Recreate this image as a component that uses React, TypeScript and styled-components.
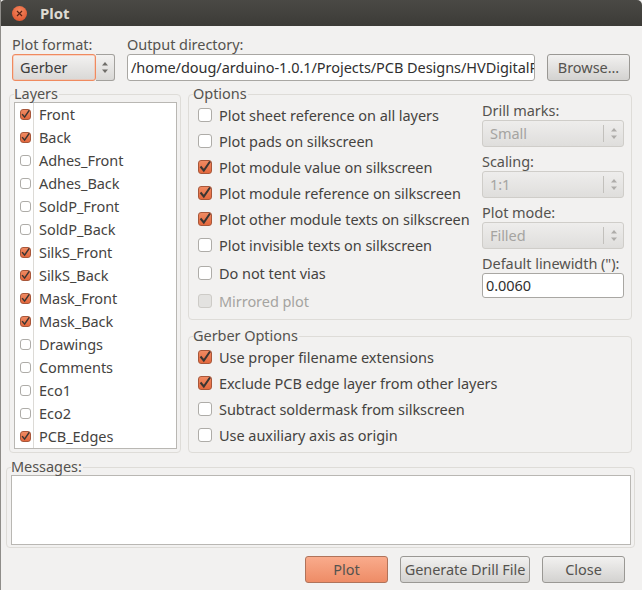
import { ReactNode } from 'react'
import styled, { createGlobalStyle } from 'styled-components'

const GlobalStyle = createGlobalStyle`
  html, body {
    margin: 0;
    padding: 0;
    background: #f2f1f0;
  }
  * {
    box-sizing: border-box;
  }
`

const TEXT_COLOR = '#3c3c3c'
const LABEL_COLOR = '#55534f'
const FRAME_COLOR = '#dedcd8'

const Window = styled.div`
  width: 642px;
  height: 590px;
  overflow: hidden;
  background: #f2f1f0;
  border-left: 1px solid #8f8d89;
  font-family: 'Noto Sans', sans-serif;
  font-size: 14.5px;
  letter-spacing: -0.05px;
  color: ${TEXT_COLOR};
  display: flex;
  flex-direction: column;
`

const TitleBar = styled.div`
  height: 26px;
  margin-left: -1px;
  flex: none;
  display: flex;
  align-items: center;
  gap: 13px;
  padding-left: 12px;
  border-radius: 5px 5px 0 0;
  background: linear-gradient(#4a4945, #3c3b37);
  color: #dfdbd2;
  font-size: 15px;
  font-weight: 700;
`

const CloseDot = styled.span`
  width: 15px;
  height: 15px;
  border-radius: 50%;
  background: radial-gradient(circle at 50% 35%, #f58b62, #dc4a25);
  display: flex;
  align-items: center;
  justify-content: center;
`

const TopRow = styled.div`
  display: grid;
  grid-template-columns: 103px 408px 83px;
  column-gap: 12px;
  padding: 10px 0 0 11px;
  align-items: end;
`

const FieldLabel = styled.div`
  height: 18px;
  line-height: 17px;
  color: ${LABEL_COLOR};
  white-space: nowrap;
`

const ComboGroup = styled.div`
  display: flex;
  height: 27px;
`

const ComboMain = styled.div`
  width: 84px;
  height: 27px;
  padding-left: 7px;
  line-height: 25px;
  border: 1px solid #f08a5f;
  box-shadow: 0 0 0 0.5px #f7b69b inset;
  border-radius: 3px;
  background: linear-gradient(#f3f2f1, #d9d8d6);
`

const ComboSpin = styled.div`
  width: 19px;
  height: 27px;
  display: flex;
  align-items: center;
  justify-content: center;
  border: 1px solid #a3a19d;
  border-left: none;
  border-radius: 0 3px 3px 0;
  background: linear-gradient(#f3f2f1, #d9d8d6);
`

const DisabledCombo = styled.div`
  width: 142px;
  height: 27px;
  display: flex;
  align-items: center;
  border: 1px solid #cfcdc9;
  border-radius: 3px;
  background: linear-gradient(#eeedec, #dfdedc);
  color: #a5a4a1;
  padding-left: 7px;
`

const DisabledValue = styled.span`
  flex: 1;
  margin-bottom: 2px;
`

const DisabledSpin = styled.span`
  width: 20px;
  height: 17px;
  border-left: 1px solid #c2c0bc;
  display: flex;
  align-items: center;
  justify-content: center;
`

const TextInput = styled.div`
  height: 27px;
  padding-left: 3px;
  line-height: 25px;
  background: #fff;
  border: 1px solid #a9a7a3;
  border-radius: 3px;
  color: #2f2f2f;
  white-space: nowrap;
  overflow: hidden;
`

const PushButton = styled.div<{ $width: number; $primary?: boolean }>`
  width: ${(props) => props.$width}px;
  height: 27px;
  line-height: 25px;
  text-align: center;
  border-radius: 3px;
  white-space: nowrap;
  color: ${LABEL_COLOR};
  border: 1px solid ${(props) => (props.$primary ? '#b0735a' : '#9a9894')};
  background: ${(props) =>
    props.$primary ? 'linear-gradient(#f9ab8c, #ee8c66)' : 'linear-gradient(#f2f1f0, #d3d2d0)'};
`

const Middle = styled.div`
  display: flex;
  gap: 7px;
  margin-top: 13px;
  padding-left: 8px;
`

const Frame = styled.div`
  position: relative;
  border: 1px solid ${FRAME_COLOR};
  border-radius: 4px;
`

const Legend = styled.span`
  position: absolute;
  top: -11px;
  left: 4px;
  height: 18px;
  line-height: 18px;
  padding-right: 1px;
  background: #f2f1f0;
  color: ${LABEL_COLOR};
`

const LayersFrame = styled(Frame)`
  width: 172px;
  height: 359px;
  padding: 7px 3px 0 4px;
`

const LayerList = styled.div`
  height: 347px;
  background: #fff;
  border: 1px solid #b9b7b3;
`

const LayerRow = styled.div`
  height: 23px;
  display: flex;
  align-items: center;
`

const LayerCheckCell = styled.div`
  width: 19px;
  height: 23px;
  padding-left: 5px;
  display: flex;
  align-items: center;
  border-right: 1px solid #dcdad6;
`

const LayerName = styled.span`
  margin: 0 0 2px 5px;
  color: #45433f;
`

const RightColumn = styled.div`
  width: 444px;
  display: flex;
  flex-direction: column;
  gap: 16px;
`

const OptionsFrame = styled(Frame)`
  height: 226px;
  padding: 7px 7px 0 9px;
  display: flex;
  justify-content: space-between;
`

const GerberFrame = styled(Frame)`
  height: 117px;
  padding: 7px 0 0 9px;
`

const CheckColumn = styled.div`
  min-width: 0;
`

const CheckRow = styled.div<{ $spaced?: boolean; $disabled?: boolean }>`
  height: 26px;
  margin-top: ${(props) => (props.$spaced ? 2 : 0)}px;
  display: flex;
  align-items: center;
  gap: 7px;
  white-space: nowrap;
  color: ${(props) => (props.$disabled ? '#a5a4a1' : '#45433f')};
`

const SideColumn = styled.div`
  width: 142px;
  display: flex;
  flex-direction: column;
`

const SideField = styled.div`
  margin-bottom: 6px;
`

const WidthInput = styled(TextInput)`
  height: 25px;
  line-height: 23px;
`

const MessagesFrame = styled(Frame)`
  width: 629px;
  height: 81px;
  margin: 14px 0 0 5px;
  padding: 7px 3px 0 4px;
`

const MessagesBox = styled.div`
  height: 70px;
  background: #fff;
  border: 1px solid #b9b7b3;
`

const Footer = styled.div`
  display: flex;
  justify-content: flex-end;
  gap: 12px;
  margin-top: 8px;
  padding-right: 17px;
`

const Box = styled.span<{ $size: number; $checked?: boolean; $disabled?: boolean }>`
  flex: none;
  width: ${(props) => props.$size}px;
  height: ${(props) => props.$size}px;
  display: flex;
  align-items: center;
  justify-content: center;
  border-radius: 3px;
  border: 1px solid
    ${(props) => (props.$checked ? '#a8573a' : props.$disabled ? '#cdcbc7' : '#aeaca8')};
  background: ${(props) =>
    props.$checked ? 'linear-gradient(#f08a62, #e4683d)' : props.$disabled ? '#e3e2e0' : '#fff'};
`

const Arrows = ({ color }: { color: string }) => (
  <svg width="6" height="13" viewBox="0 0 6 13">
    <path d="M3 1 L6 4.5 H0 Z" fill={color} />
    <path d="M3 12 L6 8.5 H0 Z" fill={color} />
  </svg>
)

const CheckMark = ({ size }: { size: number }) => (
  <svg width={size} height={size} viewBox="0 0 12 12">
    <path d="M1.5 5.5 L4.8 9.5 L11 0.5" fill="none" stroke="#3a3532" strokeWidth="2" />
  </svg>
)

const Check = ({ size, checked, disabled }: { size: number; checked?: boolean; disabled?: boolean }) => (
  <Box $size={size} $checked={checked} $disabled={disabled}>
    {checked && <CheckMark size={size - 2} />}
  </Box>
)

const Option = ({
  checked,
  spaced,
  disabled,
  children,
}: {
  checked?: boolean
  spaced?: boolean
  disabled?: boolean
  children: ReactNode
}) => (
  <CheckRow $spaced={spaced} $disabled={disabled}>
    <Check size={14} checked={checked} disabled={disabled} />
    <span>{children}</span>
  </CheckRow>
)

const SelectField = ({ label, value }: { label: string; value: string }) => (
  <SideField>
    <FieldLabel>{label}</FieldLabel>
    <DisabledCombo>
      <DisabledValue>{value}</DisabledValue>
      <DisabledSpin>
        <Arrows color="#aeaca9" />
      </DisabledSpin>
    </DisabledCombo>
  </SideField>
)

const LAYERS: [string, boolean][] = [
  ['Front', true],
  ['Back', true],
  ['Adhes_Front', false],
  ['Adhes_Back', false],
  ['SoldP_Front', false],
  ['SoldP_Back', false],
  ['SilkS_Front', true],
  ['SilkS_Back', true],
  ['Mask_Front', true],
  ['Mask_Back', true],
  ['Drawings', false],
  ['Comments', false],
  ['Eco1', false],
  ['Eco2', false],
  ['PCB_Edges', true],
]

const App = () => (
  <Window>
    <GlobalStyle />
    <TitleBar>
      <CloseDot>
        <svg width="7" height="7" viewBox="0 0 7 7">
          <path d="M1 1 L6 6 M6 1 L1 6" stroke="#5a2112" strokeWidth="1.2" />
        </svg>
      </CloseDot>
      Plot
    </TitleBar>

    <TopRow>
      <div>
        <FieldLabel>Plot format:</FieldLabel>
        <ComboGroup>
          <ComboMain>Gerber</ComboMain>
          <ComboSpin>
            <Arrows color="#6f6d69" />
          </ComboSpin>
        </ComboGroup>
      </div>
      <div>
        <FieldLabel>Output directory:</FieldLabel>
        <TextInput>/home/doug/arduino-1.0.1/Projects/PCB Designs/HVDigitalPlot</TextInput>
      </div>
      <PushButton $width={83}>Browse...</PushButton>
    </TopRow>

    <Middle>
      <LayersFrame>
        <Legend>Layers</Legend>
        <LayerList>
          {LAYERS.map(([name, checked]) => (
            <LayerRow key={name}>
              <LayerCheckCell>
                <Check size={11} checked={checked} />
              </LayerCheckCell>
              <LayerName>{name}</LayerName>
            </LayerRow>
          ))}
        </LayerList>
      </LayersFrame>

      <RightColumn>
        <OptionsFrame>
          <Legend>Options</Legend>
          <CheckColumn>
            <Option>Plot sheet reference on all layers</Option>
            <Option>Plot pads on silkscreen</Option>
            <Option checked>Plot module value on silkscreen</Option>
            <Option checked>Plot module reference on silkscreen</Option>
            <Option checked>Plot other module texts on silkscreen</Option>
            <Option>Plot invisible texts on silkscreen</Option>
            <Option spaced>Do not tent vias</Option>
            <Option spaced disabled>
              Mirrored plot
            </Option>
          </CheckColumn>
          <SideColumn>
            <SelectField label="Drill marks:" value="Small" />
            <SelectField label="Scaling:" value="1:1" />
            <SelectField label="Plot mode:" value="Filled" />
            <FieldLabel>Default linewidth ("):</FieldLabel>
            <WidthInput>0.0060</WidthInput>
          </SideColumn>
        </OptionsFrame>

        <GerberFrame>
          <Legend>Gerber Options</Legend>
          <Option checked>Use proper filename extensions</Option>
          <Option checked>Exclude PCB edge layer from other layers</Option>
          <Option>Subtract soldermask from silkscreen</Option>
          <Option>Use auxiliary axis as origin</Option>
        </GerberFrame>
      </RightColumn>
    </Middle>

    <MessagesFrame>
      <Legend>Messages:</Legend>
      <MessagesBox />
    </MessagesFrame>

    <Footer>
      <PushButton $width={83} $primary>
        Plot
      </PushButton>
      <PushButton $width={130}>Generate Drill File</PushButton>
      <PushButton $width={83}>Close</PushButton>
    </Footer>
  </Window>
)

export default App
